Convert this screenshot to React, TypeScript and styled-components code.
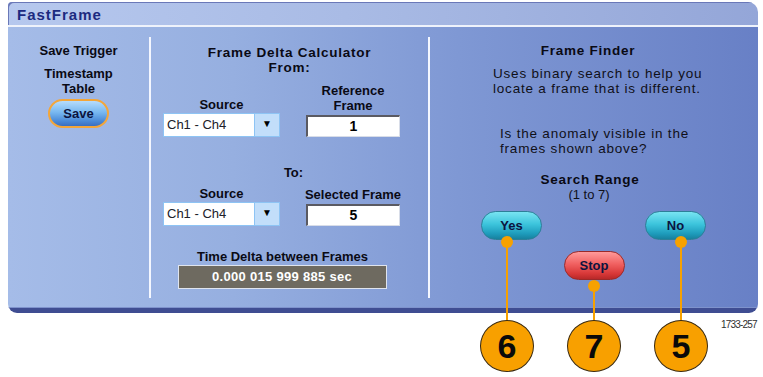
import styled, { createGlobalStyle, css } from 'styled-components';

const GlobalStyle = createGlobalStyle`
  html, body {
    margin: 0;
    padding: 0;
    background: #ffffff;
  }
  body {
    font-family: "Liberation Sans", Arial, sans-serif;
    color: #000000;
  }
`;

// callouts hang below the buttons, bubbles all share one row
const BUBBLE_Y = 346;
const CALLOUTS = [
  { label: '6', x: 507, dotY: 242 },
  { label: '7', x: 594, dotY: 286 },
  { label: '5', x: 681, dotY: 242 },
];

type Tone = 'teal' | 'red' | 'save';

const SourceField = () => (
  <FieldGroup $w={117}>
    <Heading>Source</Heading>
    <Select>
      <SelectValue>Ch1 - Ch4</SelectValue>
      <SelectArrow>▼</SelectArrow>
    </Select>
  </FieldGroup>
);

export default function App() {
  return (
    <>
      <GlobalStyle />
      <Page>
        <Panel>
          <TitleBar>
            <Title>FastFrame</Title>
          </TitleBar>
          <Body>
            <LeftColumn>
              <Heading>Save Trigger</Heading>
              <Heading $mt={8}>Timestamp</Heading>
              <Heading>Table</Heading>
              <PillButton $tone="save" $mt={3}>Save</PillButton>
            </LeftColumn>
            <Divider />
            <MiddleColumn>
              <Heading $wide>Frame Delta Calculator</Heading>
              <Heading $wide>From:</Heading>
              <FieldRow $mt={8}>
                <SourceField />
                <FieldGroup $w={94}>
                  <Heading>Reference</Heading>
                  <Heading>Frame</Heading>
                  <NumberBox>1</NumberBox>
                </FieldGroup>
              </FieldRow>
              <Heading $mt={28} $shift={4}>To:</Heading>
              <FieldRow $mt={6}>
                <SourceField />
                <FieldGroup $w={94}>
                  <Heading>Selected Frame</Heading>
                  <NumberBox>5</NumberBox>
                </FieldGroup>
              </FieldRow>
              <Heading $mt={23} $shift={-7}>Time Delta between Frames</Heading>
              <DeltaBox>0.000 015 999 885 sec</DeltaBox>
            </MiddleColumn>
            <Divider />
            <RightColumn>
              <Heading $wide $shift={-6}>Frame Finder</Heading>
              <Paragraph $pl={63} $mt={8}>
                Uses binary search to help you
                <br />
                locate a frame that is different.
              </Paragraph>
              <Paragraph $pl={70} $mt={30}>
                Is the anomaly visible in the
                <br />
                frames shown above?
              </Paragraph>
              <Heading $wide $mt={16} $shift={-4}>Search Range</Heading>
              <RangeText>(1 to 7)</RangeText>
              <AnswerRow>
                <PillButton $tone="teal">Yes</PillButton>
                <PillButton $tone="teal">No</PillButton>
              </AnswerRow>
              <StopRow>
                <PillButton $tone="red">Stop</PillButton>
              </StopRow>
            </RightColumn>
          </Body>
          <BottomBar />
        </Panel>
        <FigureId>1733-257</FigureId>
        {CALLOUTS.map(({ label, x, dotY }) => (
          <Callout key={label} style={{ left: x, top: dotY }}>
            <CalloutLine style={{ height: BUBBLE_Y - dotY }} />
            <CalloutBubble style={{ top: BUBBLE_Y - dotY - 26 }}>{label}</CalloutBubble>
          </Callout>
        ))}
      </Page>
    </>
  );
}

const Page = styled.div`
  position: relative;
  width: 763px;
  height: 377px;
  padding: 2px 0 0 8px;
  box-sizing: border-box;
  overflow: hidden;
`;

const Panel = styled.div`
  width: 750px;
  display: flex;
  flex-direction: column;
  border-radius: 0 10px 9px 9px;
  overflow: hidden;
`;

const TitleBar = styled.div`
  height: 23px;
  display: flex;
  align-items: center;
  padding-left: 9px;
  background: linear-gradient(90deg, #b6c8ee 0%, #a9bbe5 45%, #94a6d8 100%);
  border-bottom: 2px solid #eef2fb;
  border-top-left-radius: 4px;
  box-shadow: inset 2px 2px 0 -1px #6a78b8;
`;

const Title = styled.span`
  font-size: 15px;
  font-weight: bold;
  letter-spacing: 1px;
  color: #1c2a80;
  margin-top: 1px;
`;

const Body = styled.div`
  height: 280px;
  display: flex;
  padding: 10px 0 9px;
  box-sizing: border-box;
  background: linear-gradient(90deg, #a5bce8 0%, #96afe0 30%, #7f98d4 60%, #6880c6 100%);
`;

const BottomBar = styled.div`
  height: 5px;
  background: #3f4d92;
  border-top: 1px solid #7e92cc;
`;

const Divider = styled.div`
  width: 2px;
  background: #f4f7ff;
`;

const Column = styled.div`
  display: flex;
  flex-direction: column;
  align-items: center;
`;

const LeftColumn = styled(Column)`
  width: 141px;
  padding-top: 6px;
`;

const MiddleColumn = styled(Column)`
  width: 277px;
  padding-top: 8px;
`;

const RightColumn = styled(Column)`
  flex: 1;
  align-items: stretch;
  padding-top: 6px;
`;

const Heading = styled.div<{ $mt?: number; $wide?: boolean; $shift?: number }>`
  font-size: 13px;
  line-height: 15px;
  font-weight: bold;
  text-align: center;
  color: #0a0a14;
  margin-top: ${({ $mt }) => $mt ?? 0}px;
  position: relative;
  left: ${({ $shift }) => $shift ?? 0}px;
  letter-spacing: ${({ $wide }) => ($wide ? '0.75px' : '0')};
  white-space: nowrap;
  ${({ $wide }) =>
    $wide &&
    css`
      font-size: 13.5px;
    `}
`;

const FieldRow = styled.div<{ $mt: number }>`
  align-self: flex-start;
  display: flex;
  align-items: flex-end;
  gap: 26px;
  margin-top: ${({ $mt }) => $mt}px;
  margin-left: 12px;
`;

const FieldGroup = styled.div<{ $w: number }>`
  width: ${({ $w }) => $w}px;
  display: flex;
  flex-direction: column;
  align-items: center;
`;

const Select = styled.div`
  width: 117px;
  height: 24px;
  margin-top: 1px;
  display: flex;
  box-sizing: border-box;
  border: 1px solid #8ec4f4;
  background: #ffffff;
`;

const SelectValue = styled.div`
  flex: 1;
  font-size: 13px;
  line-height: 22px;
  padding-left: 3px;
  color: #202028;
`;

const SelectArrow = styled.div`
  width: 24px;
  background: #c2defa;
  border-left: 1px solid #8ec4f4;
  font-size: 10px;
  line-height: 20px;
  text-align: center;
  color: #000000;
`;

const NumberBox = styled.div`
  width: 94px;
  height: 22px;
  margin-top: 2px;
  box-sizing: border-box;
  background: #ffffff;
  border-top: 2px solid #5a5a62;
  border-left: 2px solid #5a5a62;
  border-right: 1px solid #d8dde8;
  border-bottom: 1px solid #d8dde8;
  font-size: 14px;
  font-weight: bold;
  line-height: 19px;
  text-align: center;
`;

const DeltaBox = styled.div`
  width: 209px;
  height: 24px;
  margin-top: 1px;
  margin-left: -15px;
  box-sizing: border-box;
  background: #6e6a60;
  border: 1px solid #dfe4ee;
  color: #ffffff;
  font-size: 13px;
  font-weight: bold;
  line-height: 22px;
  text-align: center;
  letter-spacing: 0.3px;
`;

const Paragraph = styled.div<{ $pl: number; $mt: number }>`
  padding-left: ${({ $pl }) => $pl}px;
  margin-top: ${({ $mt }) => $mt}px;
  font-size: 13.5px;
  line-height: 15px;
  letter-spacing: 0.8px;
  color: #101018;
  white-space: nowrap;
`;

const RangeText = styled.div`
  text-align: center;
  font-size: 13px;
  line-height: 15px;
  margin-left: -10px;
  color: #101018;
`;

const AnswerRow = styled.div`
  display: flex;
  justify-content: space-between;
  padding: 0 52px 0 51px;
  margin-top: 9px;
`;

const StopRow = styled.div`
  display: flex;
  justify-content: center;
  margin-top: 11px;
`;

const tones = {
  teal: css`
    background: linear-gradient(180deg, #78e4f2 0%, #3cc4dc 45%, #1e9cbc 80%, #17819e 100%);
    border: 1px solid #2d7f98;
  `,
  red: css`
    background: linear-gradient(180deg, #ff9a9a 0%, #f06060 45%, #d83838 80%, #b82828 100%);
    border: 1px solid #9a2a2a;
  `,
  save: css`
    background: linear-gradient(180deg, #b6dcfc 0%, #78b8f0 45%, #4a8ad8 80%, #3a6ec0 100%);
    border: 2px solid #f3a63a;
  `,
};

const PillButton = styled.div<{ $tone: Tone; $mt?: number }>`
  width: 61px;
  height: 29px;
  box-sizing: border-box;
  border-radius: 15px;
  margin-top: ${({ $mt }) => $mt ?? 0}px;
  display: flex;
  align-items: center;
  justify-content: center;
  font-size: 13px;
  font-weight: bold;
  color: #0c1440;
  ${({ $tone }) => tones[$tone]}
`;

const FigureId = styled.div`
  position: absolute;
  left: 721px;
  top: 319px;
  font-size: 10px;
  letter-spacing: -0.8px;
  color: #303030;
`;

const Callout = styled.div`
  position: absolute;
  width: 0;
  height: 0;
`;

const CalloutLine = styled.div`
  position: absolute;
  left: -1px;
  top: 0;
  width: 2px;
  background: #f7a100;
  &::before {
    content: '';
    position: absolute;
    left: -5px;
    top: -6px;
    width: 12px;
    height: 12px;
    border-radius: 50%;
    background: #f7a100;
  }
`;

const CalloutBubble = styled.div`
  position: absolute;
  left: -27px;
  width: 54px;
  height: 52px;
  box-sizing: border-box;
  border-radius: 50%;
  background: #f8a000;
  border: 1.5px solid #3a2a10;
  display: flex;
  align-items: center;
  justify-content: center;
  font-size: 34px;
  font-weight: bold;
  color: #0a0a0a;
`;
